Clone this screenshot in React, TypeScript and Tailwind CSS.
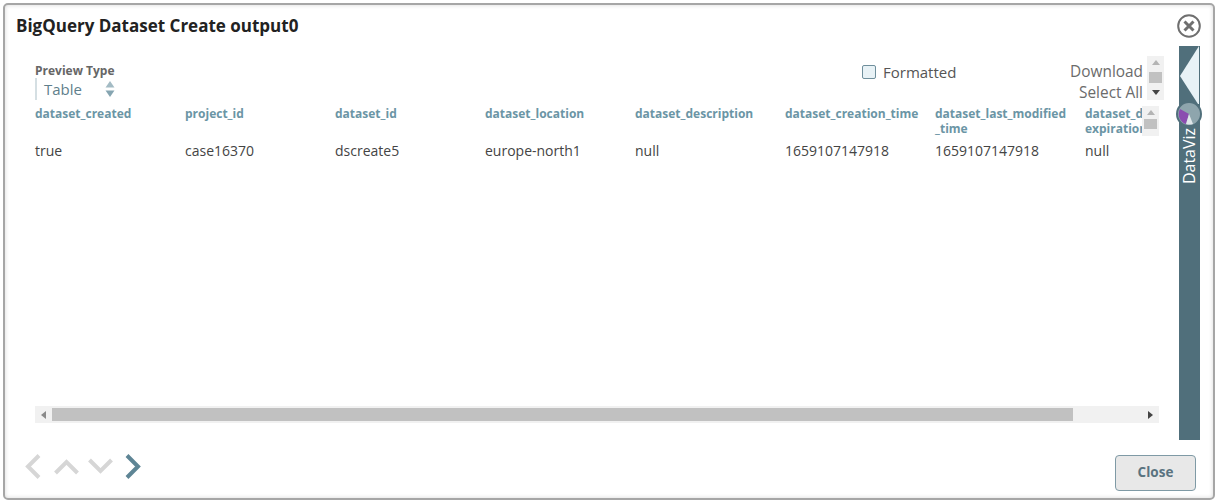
const columns = [
  { name: "dataset_created", value: "true" },
  { name: "project_id", value: "case16370" },
  { name: "dataset_id", value: "dscreate5" },
  { name: "dataset_location", value: "europe-north1" },
  { name: "dataset_description", value: "null" },
  { name: "dataset_creation_time", value: "1659107147918" },
  { name: "dataset_last_modified _time", value: "1659107147918" },
];

function ScrollTriangle({ dir, color }: { dir: "up" | "down" | "left" | "right"; color: string }) {
  const points = {
    up: "0,6 4,1 8,6",
    down: "0,1 8,1 4,6",
    left: "6,0 6,8 1,4",
    right: "1,0 1,8 6,4",
  }[dir];
  return (
    <svg width="8" height="8" viewBox="0 0 8 8" className="shrink-0">
      <polygon points={points} fill={color} />
    </svg>
  );
}

function NavChevron({ width, height, points, color }: { width: number; height: number; points: string; color: string }) {
  return (
    <svg width={width} height={height} viewBox={`0 0 ${width} ${height}`} className="shrink-0">
      <polyline points={points} fill="none" stroke={color} strokeWidth="4" />
    </svg>
  );
}

function DataVizTab() {
  return (
    <div className="w-[21px] h-[394px] bg-[#506f7b] flex flex-col items-center relative shrink-0">
      <svg width="21" height="58" viewBox="0 0 21 58" className="shrink-0">
        <polygon points="20,0 20,58 19,58 1,30" fill="#e8f2f6" />
      </svg>
      <svg width="26" height="26" viewBox="0 0 26 26" className="absolute top-[55px] left-[-3px]">
        <circle cx="13" cy="13" r="12" fill="#8ea5ad" stroke="#506f7b" strokeWidth="2" />
        <path d="M13 13 L4 8 A10.5 10.5 0 0 0 10 23 Z" fill="#8b4cb0" />
        <path d="M13 13 L10 23 A10.5 10.5 0 0 0 17 23 Z" fill="#dfe6e9" />
      </svg>
      <span className="absolute top-[82px] left-0 w-[21px] h-[56px] flex items-center justify-center">
        <span className="-rotate-90 text-[16px] leading-none text-white whitespace-nowrap">DataViz</span>
      </span>
    </div>
  );
}

export default function App() {
  return (
    <div className="w-[1218px] h-[502px] bg-white pt-[3px] pl-[3px] font-['Open_Sans',sans-serif]">
      <div className="w-[1212px] h-[497px] bg-white border-2 border-[#a6a6a6] rounded-[5px] shadow-[inset_0_0_4px_#d8d8d8] flex flex-col relative">
        <div className="h-[41px] shrink-0 flex items-center justify-between pl-[11px] pr-[12px]">
          <h1 className="text-[17px] font-bold text-[#222] leading-none">BigQuery Dataset Create output0</h1>
          <svg width="24" height="24" viewBox="0 0 24 24" className="mt-[1px]">
            <circle cx="12" cy="12" r="10.8" fill="none" stroke="#6f6f6f" strokeWidth="2" />
            <path d="M7.5 7.5 L16.5 16.5 M16.5 7.5 L7.5 16.5" stroke="#6f6f6f" strokeWidth="3" />
          </svg>
        </div>

        <div className="flex-1 flex pl-[30px] pr-[13px] min-h-0">
          <div className="w-[1124px] shrink-0 flex flex-col pt-[10px]">
            <div className="h-[48px] flex shrink-0">
              <div className="w-[827px] shrink-0 pt-[7px]">
                <div className="text-[12px] leading-[15px] font-bold text-[#666]">Preview Type</div>
                <div className="h-[22px] border-l-2 border-[#d5dfe3] pl-[7px] flex items-center gap-[21px] text-[15px] text-[#5f7f8c]">
                  <span className="w-[40px]">Table</span>
                  <svg width="10" height="16" viewBox="0 0 10 16">
                    <polygon points="5,0 9.5,6.5 0.5,6.5" fill="#a3bbc4" />
                    <polygon points="0.5,9.5 9.5,9.5 5,16" fill="#86a5b1" />
                  </svg>
                </div>
              </div>
              <label className="w-[180px] shrink-0 flex items-start gap-[7px] pt-[8px] text-[15px] leading-[17px] text-[#555]">
                <span className="w-[14px] h-[14px] mt-[1px] rounded-[2px] border border-[#6f8f9c] bg-[#e8f2f6]" />
                Formatted
              </label>
              <div className="w-[101px] shrink-0 text-right text-[15.4px] leading-[21px] text-[#6b6b6b] pt-[5px]">
                <div>Download</div>
                <div>Select All</div>
              </div>
              <div className="w-[17px] h-[44px] shrink-0 bg-[#f1f1f1] flex flex-col items-center justify-between py-[3px] ml-[4px]">
                <ScrollTriangle dir="up" color="#b4b4b4" />
                <div className="w-[13px] h-[11px] bg-[#c1c1c1] -mt-[2px]" />
                <ScrollTriangle dir="down" color="#444" />
              </div>
            </div>

            <div className="flex-1 min-h-0 flex flex-col">
              <div className="flex h-[37px] shrink-0 relative overflow-hidden">
                {columns.map((c) => (
                  <div key={c.name} className="w-[150px] shrink-0 pr-[15px] text-[12px] leading-[15px] font-bold text-[#6b95a5] break-words pt-[2px]">
                    {c.name}
                  </div>
                ))}
                <div className="w-[57px] shrink-0 overflow-hidden text-[12px] leading-[15px] font-bold text-[#6b95a5] whitespace-nowrap pt-[2px]">
                  <div>dataset_d</div>
                  <div>expiration</div>
                </div>
                <div className="w-[17px] h-[30px] bg-[#f1f1f1] flex flex-col items-center pt-[3px] gap-[2px] absolute right-0 top-[2px]">
                  <ScrollTriangle dir="up" color="#b4b4b4" />
                  <div className="w-[13px] h-[10px] bg-[#c1c1c1]" />
                </div>
              </div>
              <div className="flex h-[265px] shrink-0 text-[14px] leading-[18px] text-[#444] pt-[1px]">
                {columns.map((c) => (
                  <div key={c.name} className="w-[150px] shrink-0">{c.value}</div>
                ))}
                <div className="w-[39px] shrink-0">null</div>
              </div>
              <div className="h-[17px] w-[1124px] bg-[#f1f1f1] flex items-center shrink-0">
                <div className="w-[17px] flex justify-center"><ScrollTriangle dir="left" color="#8a8a8a" /></div>
                <div className="w-[1021px] h-[13px] bg-[#c1c1c1]" />
                <div className="flex-1 flex justify-end pr-[4px]"><ScrollTriangle dir="right" color="#444" /></div>
              </div>
            </div>
          </div>
          <div className="ml-[20px]"><DataVizTab /></div>
        </div>

        <div className="h-[60px] shrink-0 flex items-center justify-between pl-[20px] pr-[17px]">
          <div className="flex items-center gap-[9px] -mt-[4px]">
            <NavChevron width={17} height={25} points="14,1.5 3,12.5 14,23.5" color="#d6d6d6" />
            <div className="ml-[3px]">
              <NavChevron width={25} height={17} points="1.5,15 12.5,4 23.5,15" color="#d6d6d6" />
            </div>
            <NavChevron width={25} height={17} points="1.5,2 12.5,13 23.5,2" color="#d6d6d6" />
            <div className="ml-[3px]">
              <NavChevron width={17} height={25} points="2,1.5 13,12.5 2,23.5" color="#5e8595" />
            </div>
          </div>
          <button className="w-[81px] h-[36px] bg-[#e8e8e8] border border-[#7f9aa5] rounded-[4px] text-[13.5px] font-bold text-[#5a7380] mt-[9px]">
            Close
          </button>
        </div>
      </div>
    </div>
  );
}
